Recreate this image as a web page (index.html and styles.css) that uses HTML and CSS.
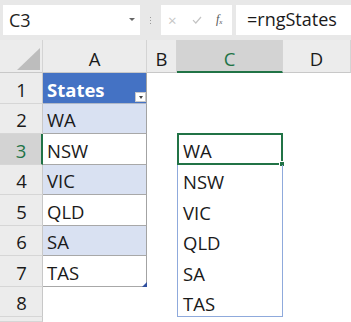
FILE: index.html
```html
<!DOCTYPE html>
<html>
<head>
<meta charset="utf-8">
<link rel="stylesheet" href="styles.css">
</head>
<body>
<div class="app">
  <div class="toolbar">
    <div class="namebox"><span class="ref">C3</span><span class="caret"></span></div>
    <div class="grip"><i></i><i></i><i></i></div>
    <div class="fbtns">
      <span class="fb cancel">×</span>
      <svg class="fb check" width="10" height="8" viewBox="0 0 10 8"><path d="M1 4.2 L3.8 7 L9 1" fill="none" stroke="#c4c4c4" stroke-width="1.2"/></svg>
      <span class="fb fx">f<sub>x</sub></span>
    </div>
    <div class="formula">=rngStates</div>
  </div>
  <div class="sheet">
    <div class="corner"><span class="tri"></span></div>
    <div class="ch">A</div>
    <div class="ch">B</div>
    <div class="ch sel">C</div>
    <div class="ch">D</div>

    <div class="rh">1</div>
    <div class="c t th">States<span class="filter"></span></div>
    <div class="c"></div>
    <div class="c"></div>
    <div class="c"></div>

    <div class="rh">2</div>
    <div class="c t band">WA</div>
    <div class="c"></div>
    <div class="c"></div>
    <div class="c"></div>

    <div class="rh sel">3</div>
    <div class="c t">NSW</div>
    <div class="c"></div>
    <div class="c active">WA<span class="handle"></span></div>
    <div class="c"></div>

    <div class="rh">4</div>
    <div class="c t band">VIC</div>
    <div class="c"></div>
    <div class="c spill">NSW</div>
    <div class="c"></div>

    <div class="rh">5</div>
    <div class="c t">QLD</div>
    <div class="c"></div>
    <div class="c spill">VIC</div>
    <div class="c"></div>

    <div class="rh">6</div>
    <div class="c t band">SA</div>
    <div class="c"></div>
    <div class="c spill">QLD</div>
    <div class="c"></div>

    <div class="rh">7</div>
    <div class="c t last">TAS<span class="resize"></span></div>
    <div class="c"></div>
    <div class="c spill">SA</div>
    <div class="c"></div>

    <div class="rh">8</div>
    <div class="c"></div>
    <div class="c"></div>
    <div class="c spill end">TAS</div>
    <div class="c"></div>

    <div class="rh"></div>
    <div class="c"></div>
    <div class="c"></div>
    <div class="c"></div>
    <div class="c"></div>
  </div>
</div>
</body>
</html>
```

FILE: styles.css
```css
* { box-sizing: border-box; }
html, body { margin: 0; padding: 0; }
body {
  width: 351px;
  height: 322px;
  overflow: hidden;
  background: #ffffff;
  font-family: "Open Sans", "Noto Sans", sans-serif;
  color: #1a1a1a;
}
.app {
  display: flex;
  flex-direction: column;
  height: 322px;
}
.toolbar {
  height: 40px;
  background: #e8e8e8;
  display: flex;
  align-items: flex-start;
  padding-top: 5px;
  padding-left: 3px;
}
.namebox {
  width: 137px;
  height: 30px;
  background: #ffffff;
  display: flex;
  align-items: center;
  justify-content: space-between;
  padding: 0 5px 0 6px;
}
.ref {
  font-size: 18px;
  line-height: 24px;
  color: #222;
}
.caret {
  width: 0;
  height: 0;
  border-left: 3px solid transparent;
  border-right: 3px solid transparent;
  border-top: 3px solid #666;
  margin-bottom: 2px;
}
.grip {
  width: 21px;
  height: 30px;
  display: flex;
  flex-direction: column;
  align-items: center;
  justify-content: center;
  gap: 2px;
}
.grip i {
  display: block;
  width: 1px;
  height: 1px;
  background: #9a9a9a;
}
.fbtns {
  width: 71px;
  height: 30px;
  background: #ffffff;
  display: flex;
  align-items: center;
  padding-left: 7px;
}
.fb { display: block; }
.cancel {
  width: 24px;
  color: #c6c6c6;
  font-size: 15px;
  line-height: 15px;
}
.check {
  margin-right: 14px;
}
.fx {
  font-family: "Liberation Serif", serif;
  font-style: italic;
  font-size: 12px;
  color: #555;
  line-height: 12px;
}
.fx sub {
  font-size: 7px;
  vertical-align: -1px;
}
.formula {
  margin-left: 4px;
  flex: 1;
  height: 30px;
  background: #ffffff;
  font-size: 18px;
  line-height: 28px;
  padding-left: 11px;
  color: #1a1a1a;
}
.sheet {
  flex: 1;
  display: grid;
  grid-template-columns: 43px 104px 30px 106px 1fr;
  grid-template-rows: 33px repeat(8, 30.5px) 1fr;
  font-size: 18.5px;
}
.corner {
  background: #ececec;
  border-right: 1px solid #d4d4d4;
  border-bottom: 1px solid #c8c8c8;
  position: relative;
}
.tri {
  position: absolute;
  right: 2px;
  bottom: 2px;
  width: 0;
  height: 0;
  border-left: 23px solid transparent;
  border-bottom: 22px solid #bdbdbd;
}
.ch {
  background: #ececec;
  border-right: 1px solid #d4d4d4;
  border-bottom: 1px solid #c8c8c8;
  display: flex;
  align-items: flex-end;
  justify-content: center;
  line-height: 24px;
  padding-bottom: 1px;
  color: #1a1a1a;
}
.ch.sel {
  background: #d3d3d3;
  color: #217346;
  border-bottom: 2px solid #217346;
  padding-bottom: 0;
}
.rh {
  background: #ececec;
  border-right: 1px solid #c8c8c8;
  border-bottom: 1px solid #d6d6d6;
  display: flex;
  align-items: flex-end;
  justify-content: center;
  line-height: 24px;
  padding-bottom: 1px;
  padding-left: 1px;
  color: #1a1a1a;
}
.rh.sel {
  background: #d3d3d3;
  color: #217346;
  border-right: 2px solid #217346;
}
.c {
  display: flex;
  align-items: flex-end;
  line-height: 24px;
  padding: 0 0 1px 4px;
  position: relative;
  white-space: nowrap;
}
.t {
  border-right: 1px solid #a3a3a3;
  border-bottom: 1px solid #a8a8a8;
}
.band { background: #d9e1f2; }
.th {
  background: #4472c4;
  color: #ffffff;
  font-weight: 700;
  border-bottom: 1px solid #b0b8c8;
}
.filter {
  position: absolute;
  right: 0;
  bottom: 1px;
  width: 11px;
  height: 10px;
  background: #ffffff;
  border: 1px solid #c8c8c8;
}
.filter::after {
  content: "";
  position: absolute;
  left: 3px;
  top: 3px;
  width: 0;
  height: 0;
  border-left: 2px solid transparent;
  border-right: 2px solid transparent;
  border-top: 3px solid #444;
}
.resize {
  position: absolute;
  right: -1px;
  bottom: -1px;
  width: 0;
  height: 0;
  border-left: 5px solid transparent;
  border-bottom: 5px solid #2f4f9f;
}
.active {
  border: 2px solid #217346;
  padding-left: 4px;
  padding-bottom: 0;
  margin-top: -1px;
}
.handle {
  position: absolute;
  right: -4px;
  bottom: -4px;
  width: 6px;
  height: 6px;
  background: #217346;
  border: 1px solid #ffffff;
}
.spill {
  border-left: 1px solid #8faadc;
  border-right: 1px solid #8faadc;
  padding-left: 5px;
}
.spill.end {
  border-bottom: 1px solid #8faadc;
  padding-bottom: 0;
}
```
